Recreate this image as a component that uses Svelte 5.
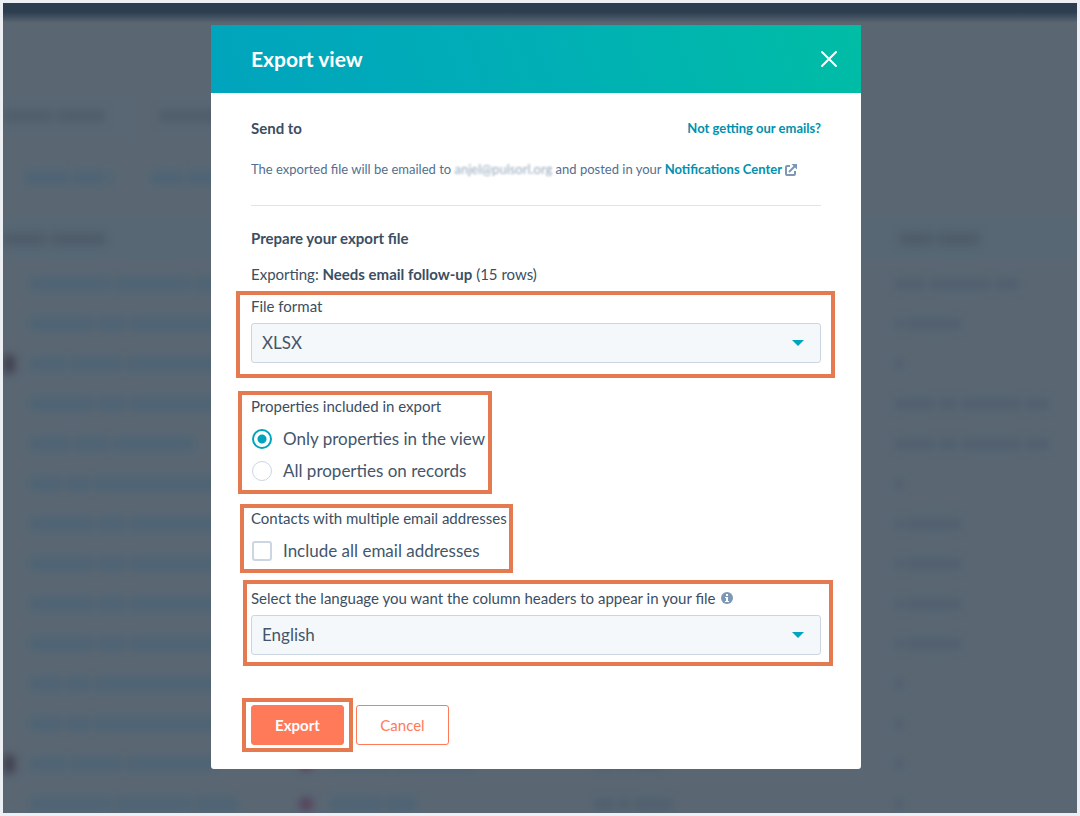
<script>
	let format = $state('XLSX');
	let properties = $state('view');
	let allEmails = $state(false);
	let language = $state('English');

	// word widths of the out-of-focus records list
	const integration = [82, 76, 42];
	const awaiting = [64, 28, 98];
	const lists = [36, 52, 92];
	const blog = [32, 24, 126];

	const records = [
		{ name: integration, status: [30, 62, 24] },
		{ name: awaiting, status: [8, 54] },
		{ name: lists, avatar: true, status: [8] },
		{ name: awaiting, status: [40, 18, 60, 24] },
		{ name: [40, 34, 82], status: [40, 18, 60, 24] },
		{ name: blog, status: [8] },
		{ name: awaiting, status: [8, 54] },
		{ name: awaiting, status: [8, 54] },
		{ name: awaiting, status: [8, 54] },
		{ name: awaiting, status: [8, 54] },
		{ name: blog, status: [8] },
		{ name: blog, status: [8] },
		{ name: lists, avatar: true, logo: true, company: [60, 80], date: [20, 12, 28], status: [8] },
		{ name: integration, logo: true, company: [52, 30], date: [20, 12, 38], status: [8] },
	];
</script>

{#snippet words(list = [])}
	<div class="words">
		{#each list as width}
			<span style:width="{width}px"></span>
		{/each}
	</div>
{/snippet}

{#snippet caret()}
	<svg class="caret" viewBox="0 0 12 6" aria-hidden="true"><path d="M0 0h12L6 6z" /></svg>
{/snippet}

<div class="page">
	<div class="behind" aria-hidden="true">
		<div class="topbar"></div>
		<div class="tabs">
			<div class="tab">{@render words([50, 48])}</div>
			<div class="tab">{@render words([60, 40])}</div>
		</div>
		<div class="filters">
			{@render words([44, 30, 6])}
			{@render words([32, 60])}
		</div>
		<div class="head">
			{@render words([44, 54])}
			{@render words([34, 42])}
		</div>
		{#each records as record}
			<div class="record">
				<i class:avatar={record.avatar}></i>
				{@render words(record.name)}
				<i class:logo={record.logo}></i>
				{@render words(record.company)}
				<div class="muted">{@render words(record.date)}</div>
				<div class="muted">{@render words(record.status)}</div>
			</div>
		{/each}
	</div>

	<div class="modal" role="dialog" aria-modal="true" aria-labelledby="title">
		<header>
			<h2 id="title">Export view</h2>
			<button class="close" type="button" aria-label="Close">
				<svg viewBox="0 0 18 18"><path d="M2 2l14 14M16 2L2 16" /></svg>
			</button>
		</header>

		<form onsubmit={(e) => e.preventDefault()}>
			<div class="send">
				<h3>Send to</h3>
				<a href="#emails">Not getting our emails?</a>
			</div>
			<p class="note">
				The exported file will be emailed to <span class="hidden">anjel@pulsorl.org</span> and posted in your
				<a href="#notifications">Notifications Center
					<svg class="external" viewBox="0 0 12 12" aria-hidden="true">
						<path d="M5 2H2a1 1 0 0 0-1 1v7a1 1 0 0 0 1 1h7a1 1 0 0 0 1-1V7M4 8l6-6" />
						<path class="tip" d="M6.500 0H12v5.500z" />
					</svg></a>
			</p>
			<hr />
			<h3>Prepare your export file</h3>
			<p class="exporting">Exporting: <strong>Needs email follow-up</strong> (15 rows)</p>

			<div class="group mark-format">
				<label class="title" for="format">File format</label>
				<div class="select">
					<select id="format" bind:value={format}>
						<option>XLSX</option>
						<option>XLS</option>
						<option>CSV</option>
					</select>
					{@render caret()}
				</div>
			</div>

			<fieldset class="group spaced mark-properties">
				<legend class="title">Properties included in export</legend>
				<label class="choice">
					<input type="radio" name="properties" value="view" bind:group={properties} />
					Only properties in the view
				</label>
				<label class="choice">
					<input type="radio" name="properties" value="all" bind:group={properties} />
					All properties on records
				</label>
			</fieldset>

			<fieldset class="group mark-contacts">
				<legend class="title">Contacts with multiple email addresses</legend>
				<label class="choice">
					<input type="checkbox" bind:checked={allEmails} />
					Include all email addresses
				</label>
			</fieldset>

			<div class="group mark-language">
				<div class="title with-info">
					<label for="language">Select the language you want the column headers to appear in your file</label>
					<svg class="info" viewBox="0 0 12 12" aria-hidden="true">
						<circle cx="6" cy="6" r="6" />
						<path d="M5 2h2v2H5zM4 5h3v4h1v1H4V9h1V6H4z" />
					</svg>
				</div>
				<div class="select">
					<select id="language" bind:value={language}>
						<option>English</option>
						<option>Deutsch</option>
						<option>Español</option>
						<option>Français</option>
					</select>
					{@render caret()}
				</div>
			</div>

			<footer>
				<div class="action mark-export">
					<button class="btn primary" type="submit">Export</button>
				</div>
				<button class="btn" type="button">Cancel</button>
			</footer>
		</form>
	</div>
</div>

<style>
	:global(body) {
		background: #eceff3;
	}
	.page {
		position: relative;
		box-sizing: border-box;
		min-height: 100vh;
		padding: 25px 20px 47px 12px;
		font-family: Lato, "Liberation Sans", sans-serif;
		font-size: 15px;
		line-height: 24px;
		color: #3b4e62;
	}

	/* out-of-focus list */
	.behind {
		position: absolute;
		inset: 3px;
		overflow: hidden;
		background: #5a6773;
		color: #4a6375;
	}
	.topbar {
		height: 20px;
		background: linear-gradient(#2d3e50 45%, #5a6773);
	}
	.words {
		display: flex;
		gap: 4px;
		filter: blur(4px);
	}
	.words span {
		height: 12px;
		background: currentColor;
		opacity: 0.8;
	}
	.tabs {
		display: flex;
		gap: 24px;
		margin-top: 72px;
		color: #4e5b69;
	}
	.tab {
		display: flex;
		align-items: center;
		box-sizing: border-box;
		width: 132px;
		height: 42px;
		background: #596774;
	}
	.filters {
		display: flex;
		align-items: center;
		gap: 38px;
		height: 81px;
		padding-left: 22px;
	}
	.head {
		display: flex;
		align-items: center;
		justify-content: space-between;
		height: 41px;
		margin-bottom: 5px;
		padding-right: 98px;
		background: #576774;
		color: #4c5967;
	}
	.record {
		display: grid;
		grid-template-columns: 27px 270px 30px 264px 301px 1fr;
		align-items: center;
		height: 40px;
	}
	.muted {
		color: #4f5e6e;
	}
	.avatar,
	.logo {
		width: 12px;
		height: 18px;
		background: #41414f;
		filter: blur(4px);
	}
	.logo {
		height: 12px;
		background: #553f5c;
	}

	/* modal */
	.modal {
		position: relative;
		max-width: 650px;
		margin: 0 auto;
		background: #fff;
		border-radius: 0 0 3px 3px;
	}
	header {
		display: flex;
		align-items: center;
		justify-content: space-between;
		height: 68px;
		padding: 0 20px 0 40px;
		background: linear-gradient(70deg, #00a4bd, #00afb6 50%, #00bda5);
		color: #fff;
	}
	h2,
	h3,
	p {
		margin: 0;
	}
	h2 {
		font-size: 21px;
		font-weight: 700;
	}
	h3 {
		font-size: 15px;
		font-weight: 700;
	}
	.close {
		display: grid;
		place-items: center;
		width: 24px;
		height: 24px;
		padding: 0;
		border: 0;
		background: none;
		cursor: pointer;
	}
	.close svg {
		width: 18px;
		height: 18px;
		fill: none;
		stroke: #fff;
		stroke-width: 2;
		stroke-linecap: round;
	}
	form {
		padding: 23px 40px 24px;
	}
	a {
		color: #0091ae;
		font-size: 13px;
		font-weight: 700;
		text-decoration: none;
	}
	.send {
		display: flex;
		justify-content: space-between;
	}
	.note {
		margin-top: 17px;
		color: #516f90;
		font-size: 13px;
	}
	.hidden {
		filter: blur(1px);
		opacity: 0.6;
	}
	.external {
		width: 12px;
		height: 12px;
		vertical-align: -2px;
		fill: none;
		stroke: #7c98b6;
		stroke-width: 2;
	}
	.tip {
		fill: #7c98b6;
		stroke: none;
	}
	hr {
		height: 1px;
		margin: 24px 0 20px;
		border: 0;
		background: #dfe3eb;
	}
	.exporting {
		margin: 12px 0 8px;
	}
	.group {
		position: relative;
		min-width: 0;
		margin: 0 0 19px;
		padding: 0;
		border: 0;
	}
	.spaced {
		margin-top: 31px;
	}
	.title {
		display: block;
		margin-bottom: 5px;
		padding: 0;
	}
	.with-info {
		display: flex;
		align-items: center;
		gap: 6px;
	}
	.info {
		width: 12px;
		height: 12px;
		fill: #7c98b6;
	}
	.info path {
		fill: #fff;
	}
	.select {
		position: relative;
	}
	select {
		appearance: none;
		display: block;
		box-sizing: border-box;
		width: 100%;
		height: 40px;
		padding: 0 40px 0 10px;
		border: 1px solid #cbd6e2;
		border-radius: 3px;
		background: #f5f8fa;
		color: #43566a;
		font: inherit;
		font-size: 17px;
	}
	.caret {
		position: absolute;
		top: 17px;
		right: 17px;
		width: 12px;
		height: 6px;
		fill: #00a4bd;
		pointer-events: none;
	}
	.choice {
		display: flex;
		align-items: center;
		gap: 10px;
		height: 32px;
		color: #43566a;
		font-size: 17px;
	}
	input {
		appearance: none;
		box-sizing: border-box;
		width: 20px;
		height: 20px;
		margin: 0 1px;
		border: 2px solid #cbd6e2;
		border-radius: 3px;
		background: #fff;
	}
	input[type='radio'] {
		border-width: 1px;
		border-radius: 50%;
	}
	input:checked {
		border: 2px solid #00a4bd;
		background: radial-gradient(circle, #00a4bd 4px, #fff 5px);
	}
	footer {
		display: flex;
		gap: 12px;
		margin-top: 50px;
	}
	.action {
		position: relative;
	}
	.btn {
		box-sizing: border-box;
		width: 93px;
		height: 40px;
		border: 1px solid #ff7a59;
		border-radius: 3px;
		background: #fff;
		color: #ff7a59;
		font: inherit;
		cursor: pointer;
	}
	.primary {
		display: block;
		background: #ff7a59;
		color: #fff;
		font-weight: 700;
	}

	/* callout frames drawn over the form */
	[class*='mark-']::after {
		content: '';
		position: absolute;
		border: 4px solid #e5794f;
		pointer-events: none;
	}
	.mark-format::after {
		inset: -3px -14px -15px -15px;
	}
	/* fieldsets place their frame from below the legend */
	.mark-properties::after {
		top: -32px;
		bottom: -7px;
		left: -13px;
		width: 246px;
	}
	.mark-contacts::after {
		top: -31px;
		bottom: -6px;
		left: -11px;
		width: 265px;
	}
	.mark-language::after {
		inset: -6px -12px -11px -8px;
	}
	.mark-export::after {
		inset: -7px -9px -7px -9px;
	}
</style>
